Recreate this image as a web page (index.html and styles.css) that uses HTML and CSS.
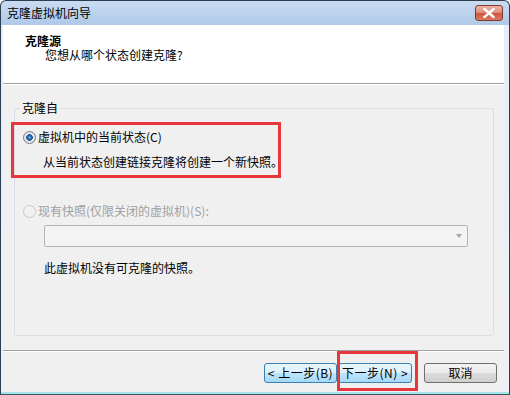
FILE: index.html
```html
<!DOCTYPE html>
<html lang="zh-CN">
<head>
    <meta charset="UTF-8">
    <title>克隆虚拟机向导</title>
    <link rel="stylesheet" href="styles.css">
</head>
<body>
    <div class="window">
        <div class="titlebar">
            <span class="title">克隆虚拟机向导</span>
            <span class="close">
                <svg width="12" height="10" viewBox="0 0 12 10"><path d="M1.5 1 L10.5 9 M10.5 1 L1.5 9" stroke="#fff" stroke-width="2.4" stroke-linecap="square"/></svg>
            </span>
        </div>

        <div class="client">
            <div class="header">
                <div class="header-title">克隆源</div>
                <div class="header-sub">您想从哪个状态创建克隆?</div>
            </div>

            <div class="content">
                <fieldset class="group">
                    <legend>克隆自</legend>
                    <div class="option option-first">
                        <span class="radio checked"></span>
                        <span>虚拟机中的当前状态(C)</span>
                    </div>
                    <div class="desc">从当前状态创建链接克隆将创建一个新快照。</div>
                    <div class="option option-second disabled">
                        <span class="radio"></span>
                        <span>现有快照(仅限关闭的虚拟机)(S):</span>
                    </div>
                    <div class="combo">
                        <span class="combo-arrow"></span>
                    </div>
                    <div class="note">此虚拟机没有可克隆的快照。</div>
                </fieldset>
            </div>

            <div class="footer">
                <button class="btn btn-hot btn-back">&lt; 上一步(B)</button>
                <button class="btn btn-hot btn-next">下一步(N) &gt;</button>
                <button class="btn btn-cancel">取消</button>
            </div>
        </div>

        <!-- annotation boxes -->
        <div class="mark mark-option"></div>
        <div class="mark mark-next"></div>
    </div>
</body>
</html>
```

FILE: styles.css
```css
body {
    margin: 0;
    width: 510px;
    height: 395px;
    font-family: "Noto Sans CJK SC", "Noto Sans", sans-serif;
    font-size: 12px;
    color: #000000;
    overflow: hidden;
}

.window {
    position: relative;
    height: 395px;
    box-sizing: border-box;
    border: 1px solid #2b3d50;
    border-bottom-color: #2f5a60;
    border-radius: 6px 6px 0 0;
    background: linear-gradient(to bottom, #c9dcf1 0, #b0c9e8 24px, #e6edf6 24px, #eef1f7 100%);
    box-shadow: inset 0 -2px 0 #a6e2e6;
    display: flex;
    flex-direction: column;
}

.titlebar {
    height: 24px;
    display: flex;
    align-items: center;
    padding-left: 6px;
}

.title {
    line-height: 14px;
}

.close {
    margin-left: auto;
    margin-right: 6px;
    width: 26px;
    height: 14px;
    border: 1px solid #7a3a33;
    border-radius: 3px;
    background: linear-gradient(to bottom, #eeb3a6 0, #e0907e 45%, #d0553e 55%, #dc7a60 100%);
    display: flex;
    align-items: center;
    justify-content: center;
}

.client {
    flex: 1;
    margin: 0 5px 3px 2px;
    background-color: #f0f0f0;
    display: flex;
    flex-direction: column;
}

.header {
    height: 59px;
    box-sizing: border-box;
    background-color: #ffffff;
    border-bottom: 1px solid #a0a0a0;
    padding: 9px 0 0 22px;
}

.header-title {
    font-weight: bold;
    line-height: 14px;
}

.header-sub {
    line-height: 14px;
    padding-left: 20px;
}

.content {
    flex: 1;
    border-top: 1px solid #ffffff;
    padding: 16px 0 0 11px;
}

.group {
    margin: 0;
    width: 480px;
    height: 235px;
    box-sizing: border-box;
    border: 1px solid #d5dfe5;
    border-radius: 3px;
    padding: 0 5px;
}

.group legend {
    padding: 0 2px;
    line-height: 14px;
}

.option {
    display: flex;
    align-items: center;
    gap: 2px;
    line-height: 16px;
    padding-left: 3px;
}

.option-first {
    margin-top: 14px;
}

.option-second {
    margin-top: 33px;
}

.disabled {
    color: #a0a0a0;
}

.radio {
    width: 11px;
    height: 11px;
    border: 1px solid #8e8f8f;
    border-radius: 50%;
    background: radial-gradient(circle, #f4f4f4 0, #e2e2e2 100%);
}

.radio.checked {
    border-color: #6f7a86;
    background: radial-gradient(circle, #8fc6ee 0, #2d6fb8 1.5px, #1a4f8f 3px, #dfe3e7 3.5px, #eef0f2 100%);
}

.disabled .radio {
    border-color: #c9c9c9;
    background: #f1f1f1;
}

.desc {
    margin-top: 9px;
    padding-left: 23px;
    line-height: 16px;
}

.combo {
    margin: 6px 0 0 24px;
    width: 424px;
    height: 22px;
    box-sizing: border-box;
    border: 1px solid #b3b3b3;
    border-radius: 2px;
    background-color: #f4f4f4;
    display: flex;
    align-items: center;
    justify-content: flex-end;
    padding-right: 5px;
}

.combo-arrow {
    width: 0;
    height: 0;
    border-left: 3px solid transparent;
    border-right: 3px solid transparent;
    border-top: 4px solid #a8a8a8;
}

.note {
    margin-top: 13px;
    padding-left: 24px;
    line-height: 16px;
}

.footer {
    height: 41px;
    box-sizing: border-box;
    border-top: 1px solid #a0a0a0;
    box-shadow: inset 0 1px 0 #ffffff;
    padding: 12px 7px 0 0;
    display: flex;
    justify-content: flex-end;
    align-items: flex-start;
}

.btn {
    height: 20px;
    padding: 0;
    font-family: inherit;
    font-size: 12px;
    line-height: 16px;
    color: #000000;
    border-radius: 3px;
}

.btn-hot {
    border: 1px solid #3c7fb1;
    background: linear-gradient(to bottom, #eaf6fd 0, #d9f0fc 50%, #bee6fd 50%, #a7d9f5 100%);
    letter-spacing: 0.5px;
}

.btn-back {
    width: 73px;
    margin-right: 1px;
}

.btn-next {
    width: 74px;
    margin-right: 12px;
}

.btn-cancel {
    width: 73px;
    border: 1px solid #707070;
    background: linear-gradient(to bottom, #f2f2f2 0, #ebebeb 50%, #dddddd 50%, #cfcfcf 100%);
}

.mark {
    position: absolute;
    border: 3px solid #e8373c;
    box-sizing: border-box;
}

.mark-option {
    left: 10px;
    top: 121px;
    width: 270px;
    height: 56px;
}

.mark-next {
    left: 336px;
    top: 350px;
    width: 81px;
    height: 40px;
}
```
